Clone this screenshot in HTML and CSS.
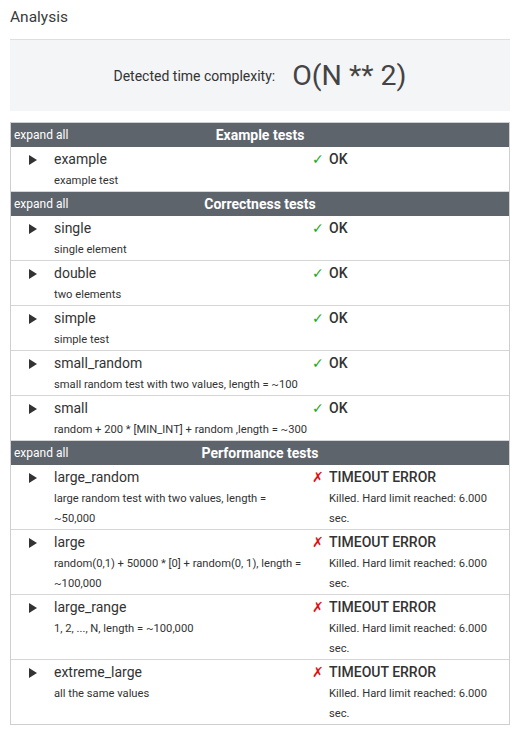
FILE: index.html
```html
<!DOCTYPE html>
<html>
<head>
<meta charset="utf-8">
<link rel="stylesheet" href="styles.css">
</head>
<body>
<div class="page">
  <h2 class="title">Analysis</h2>
  <div class="complexity">
    <span class="cx-label">Detected time complexity:</span>
    <span class="cx-value">O(N ** 2)</span>
  </div>
  <div class="tests">
    <div class="group-head"><span class="expand">expand all</span><span class="group-title">Example tests</span><span></span></div>
    <div class="row">
      <span class="arrow"></span>
      <div class="name-cell"><div class="name">example</div><div class="desc">example test</div></div>
      <div class="status"><span class="ok-icon">✓</span><div class="status-text"><div class="result">OK</div></div></div>
    </div>

    <div class="group-head"><span class="expand">expand all</span><span class="group-title">Correctness tests</span><span></span></div>
    <div class="row">
      <span class="arrow"></span>
      <div class="name-cell"><div class="name">single</div><div class="desc">single element</div></div>
      <div class="status"><span class="ok-icon">✓</span><div class="status-text"><div class="result">OK</div></div></div>
    </div>
    <div class="row">
      <span class="arrow"></span>
      <div class="name-cell"><div class="name">double</div><div class="desc">two elements</div></div>
      <div class="status"><span class="ok-icon">✓</span><div class="status-text"><div class="result">OK</div></div></div>
    </div>
    <div class="row">
      <span class="arrow"></span>
      <div class="name-cell"><div class="name">simple</div><div class="desc">simple test</div></div>
      <div class="status"><span class="ok-icon">✓</span><div class="status-text"><div class="result">OK</div></div></div>
    </div>
    <div class="row">
      <span class="arrow"></span>
      <div class="name-cell"><div class="name">small_random</div><div class="desc">small random test with two values, length = ~100</div></div>
      <div class="status"><span class="ok-icon">✓</span><div class="status-text"><div class="result">OK</div></div></div>
    </div>
    <div class="row">
      <span class="arrow"></span>
      <div class="name-cell"><div class="name">small</div><div class="desc">random + 200 * [MIN_INT] + random ,length = ~300</div></div>
      <div class="status"><span class="ok-icon">✓</span><div class="status-text"><div class="result">OK</div></div></div>
    </div>

    <div class="group-head"><span class="expand">expand all</span><span class="group-title">Performance tests</span><span></span></div>
    <div class="row">
      <span class="arrow"></span>
      <div class="name-cell"><div class="name">large_random</div><div class="desc">large random test with two values, length = ~50,000</div></div>
      <div class="status"><span class="err-icon">✗</span><div class="status-text"><div class="result">TIMEOUT ERROR</div><div class="desc">Killed. Hard limit reached: 6.000 sec.</div></div></div>
    </div>
    <div class="row">
      <span class="arrow"></span>
      <div class="name-cell"><div class="name">large</div><div class="desc">random(0,1) + 50000 * [0] + random(0, 1), length = ~100,000</div></div>
      <div class="status"><span class="err-icon">✗</span><div class="status-text"><div class="result">TIMEOUT ERROR</div><div class="desc">Killed. Hard limit reached: 6.000 sec.</div></div></div>
    </div>
    <div class="row">
      <span class="arrow"></span>
      <div class="name-cell"><div class="name">large_range</div><div class="desc">1, 2, ..., N, length = ~100,000</div></div>
      <div class="status"><span class="err-icon">✗</span><div class="status-text"><div class="result">TIMEOUT ERROR</div><div class="desc">Killed. Hard limit reached: 6.000 sec.</div></div></div>
    </div>
    <div class="row">
      <span class="arrow"></span>
      <div class="name-cell"><div class="name">extreme_large</div><div class="desc">all the same values</div></div>
      <div class="status"><span class="err-icon">✗</span><div class="status-text"><div class="result">TIMEOUT ERROR</div><div class="desc">Killed. Hard limit reached: 6.000 sec.</div></div></div>
    </div>
  </div>
</div>
</body>
</html>
```

FILE: styles.css
```css
html, body {
  margin: 0;
  padding: 0;
  background: #ffffff;
}
body {
  font-family: Roboto, "Liberation Sans", Arial, sans-serif;
  color: #3c3c3c;
}
.page {
  padding: 7px 2px 0 10px;
}
.title {
  margin: 0;
  font-size: 15.5px;
  font-weight: 400;
  line-height: 20px;
  color: #3a3a3a;
}
.complexity {
  margin-top: 12px;
  height: 72px;
  box-sizing: border-box;
  border-top: 1px solid #dedede;
  background: #f4f5f7;
  display: flex;
  align-items: center;
  justify-content: center;
  gap: 17px;
}
.cx-label {
  font-size: 14px;
  color: #333;
}
.cx-value {
  font-size: 28.5px;
  color: #444;
  font-weight: 400;
}
.tests {
  margin-top: 11px;
  border: 1px solid #cfcfcf;
}
.group-head {
  display: grid;
  grid-template-columns: 1fr auto 1fr;
  align-items: center;
  height: 24px;
  background: #5e646c;
  color: #fff;
}
.expand {
  font-size: 12px;
  padding-left: 3px;
}
.group-title {
  font-size: 14px;
  font-weight: 700;
}
.row {
  display: grid;
  grid-template-columns: 43px 254px 1fr;
  border-bottom: 1px solid #d6d6d6;
}
.row:last-child {
  border-bottom: none;
}
.arrow {
  margin-left: 18px;
  margin-top: 8px;
  width: 0;
  height: 0;
  border-top: 5px solid transparent;
  border-bottom: 5px solid transparent;
  border-left: 8px solid #333;
}
.name {
  font-size: 14px;
  line-height: 24px;
  color: #333;
}
.desc {
  font-size: 11.2px;
  line-height: 20px;
  color: #333;
}
.status {
  display: flex;
  padding-left: 4px;
  padding-right: 10px;
}
.ok-icon, .err-icon {
  width: 17px;
  flex: none;
  font-family: "DejaVu Sans", sans-serif;
  font-size: 14px;
  line-height: 24px;
}
.ok-icon {
  color: #1fa81f;
  font-weight: 700;
}
.err-icon {
  color: #e01010;
  font-style: italic;
  font-weight: 700;
}
.result {
  font-size: 14px;
  font-weight: 500;
  line-height: 24px;
  color: #333;
}
```
